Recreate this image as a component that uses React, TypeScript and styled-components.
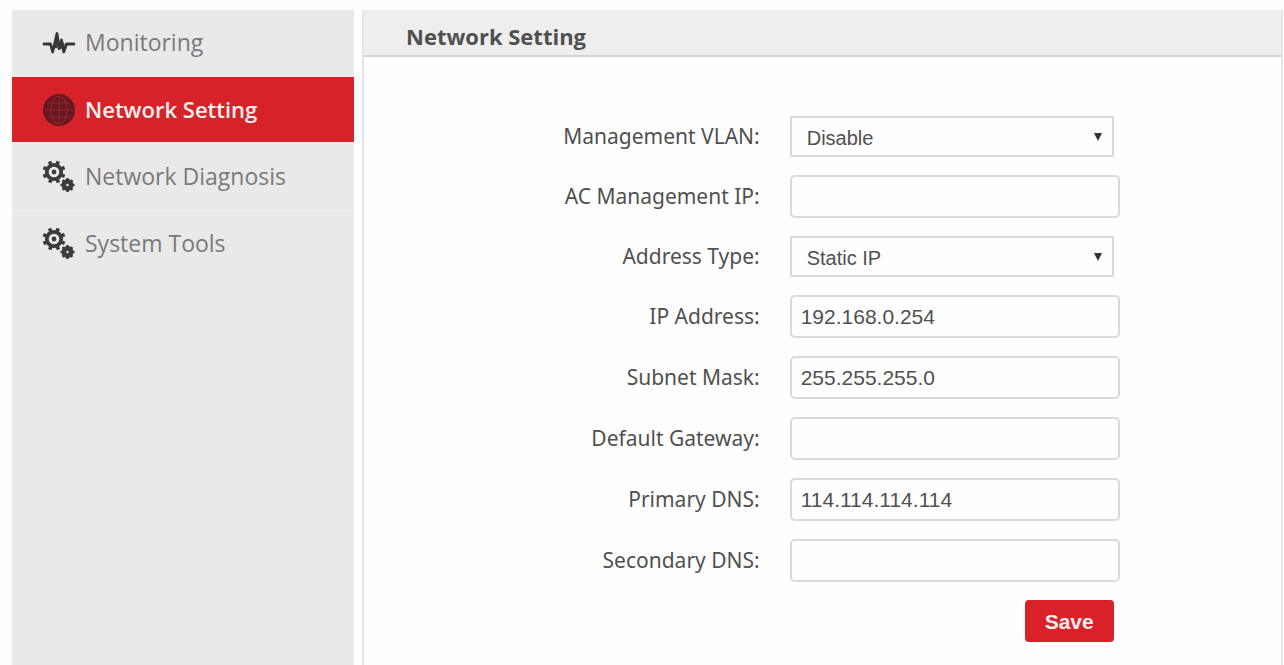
import React from "react";
import styled, { createGlobalStyle, css } from "styled-components";

const GlobalStyle = createGlobalStyle`
  *, *::before, *::after { box-sizing: border-box; }
  body {
    margin: 0;
    background: #fefefe;
    color: #505050;
    font-family: "Noto Sans", "Open Sans", sans-serif;
    font-size: 21px;
  }
`;

const Page = styled.div`
  display: flex;
  gap: 8px;
  min-height: 100vh;
  padding: 10px 1px 0 12px;
`;

const Sidebar = styled.nav`
  flex: 0 0 342px;
  background: #e9e9e9;
`;

const Menu = styled.ul`
  margin: 0;
  padding: 0;
  list-style: none;
`;

const MenuItem = styled.li`
  border-bottom: 2px solid #ececec;

  &:last-child { border-bottom: 0; }
`;

const MenuLink = styled.a<{ $active?: boolean }>`
  display: flex;
  align-items: center;
  gap: 9px;
  height: 65px;
  padding: 0 0 2px 30px;
  color: ${(p) => (p.$active ? "#fff0ee" : "#7a7a7a")};
  background: ${(p) => (p.$active ? "#d82229" : "transparent")};
  font-family: "Open Sans", "Noto Sans", sans-serif;
  font-size: ${(p) => (p.$active ? 22 : 23)}px;
  font-weight: ${(p) => (p.$active ? 600 : 400)};
  line-height: 30px;
  text-decoration: none;
`;

const Icon = styled.svg`
  flex: none;
  width: 34px;
  height: 34px;
`;

const Panel = styled.main`
  flex: 1;
  min-width: 0;
  border: solid #e4e6e6;
  border-width: 0 2px;
`;

const PanelTitle = styled.h1`
  margin: 0;
  height: 47px;
  padding: 11px 42px 0;
  background: #eeeeee;
  border-bottom: 2px solid #d4d4d4;
  color: #505050;
  font-family: "Open Sans", "Noto Sans", sans-serif;
  font-size: 22px;
  font-weight: 700;
  line-height: 30px;
`;

const Form = styled.form`
  display: grid;
  grid-template-columns: 13fr 17fr;
  column-gap: 30px;
  row-gap: 18px;
  align-items: center;
  padding: 59px 0 23px 20px;
`;

const Label = styled.label`
  justify-self: end;
  padding-bottom: 2px;
  line-height: 38px;
  white-space: nowrap;
`;

const field = css`
  border: 2px solid #dadada;
  background-color: #fefefe;
  color: #505050;
  font-family: "Liberation Sans", Arial, sans-serif;
  outline: none;
`;

const Input = styled.input`
  ${field}
  width: 330px;
  height: 43px;
  padding: 0 9px;
  border-radius: 5px;
  font-size: 21px;
`;

const SelectBox = styled.div`
  display: grid;
  width: 324px;
  height: 41px;
  align-items: center;
  > * { grid-area: 1 / 1; }
`;

const Select = styled.select`
  ${field}
  appearance: none;
  width: 100%;
  height: 41px;
  padding: 2px 15px 0;
  border-radius: 1px;
  font-size: 20px;
`;

const Arrow = styled.svg`
  justify-self: end;
  width: 8px;
  height: 8px;
  margin-right: 12px;
  fill: #333333;
  pointer-events: none;
`;

const Actions = styled.div`
  grid-column: 2;
  display: flex;
  justify-content: flex-end;
  width: 324px;
`;

const SaveButton = styled.button`
  width: 89px;
  height: 42px;
  padding: 2px 0 0;
  border: 0;
  border-radius: 4px;
  background: #d82129;
  color: #fff0ee;
  font-family: "Liberation Sans", Arial, sans-serif;
  font-size: 21px;
  font-weight: 700;
`;

const PulseIcon = () => (
  <Icon viewBox="0 0 34 34" fill="none" stroke="#383838" strokeLinejoin="round" strokeLinecap="round" aria-hidden="true">
    <path d="M2 19h6.500l2.200 8L15 8.500l2 15L19.500 15l2.300 12 2.700-8H32" strokeWidth="2.800" />
    <path d="M15 11l-1 11M19.500 17l-1 6M22 25l-1-6" strokeWidth="2.600" />
  </Icon>
);

const GlobeIcon = () => (
  <Icon viewBox="0 0 34 34" fill="none" stroke="#96222b" strokeWidth="1.200" aria-hidden="true">
    <circle cx="17" cy="18" r="16" fill="#651820" stroke="none" />
    <path d="M3 18h28M17 4v28M6 11h22M6 25h22" />
    <ellipse cx="17" cy="18" rx="8" ry="14" />
  </Icon>
);

const teeth = [0, 45, 90, 135, 180, 225, 270, 315];

const GearsIcon = () => (
  <Icon viewBox="0 0 34 34" fill="none" stroke="#3c3c3c" aria-hidden="true">
    <circle cx="12" cy="13" r="7.200" strokeWidth="3.800" />
    <circle cx="12" cy="13" r="2.400" fill="#3c3c3c" stroke="none" />
    {teeth.map((a) => (
      <path key={a} d="M12 1.500v4" strokeWidth="3.600" transform={`rotate(${a + 22} 12 13)`} />
    ))}
    <circle cx="25.500" cy="26" r="3.600" strokeWidth="4.800" />
    {teeth.map((a) => (
      <path key={a} d="M25.500 19v2" strokeWidth="2.400" transform={`rotate(${a} 25.500 26)`} />
    ))}
  </Icon>
);

const menu = [
  { text: "Monitoring", icon: PulseIcon },
  { text: "Network Setting", icon: GlobeIcon, active: true },
  { text: "Network Diagnosis", icon: GearsIcon },
  { text: "System Tools", icon: GearsIcon },
];

type FieldDef = { id: string; label: string; value: string; options?: string[] };

const fields: FieldDef[] = [
  { id: "vlan", label: "Management VLAN:", value: "Disable", options: ["Disable", "Enable"] },
  { id: "ac-ip", label: "AC Management IP:", value: "" },
  { id: "type", label: "Address Type:", value: "Static IP", options: ["Static IP", "Dynamic IP"] },
  { id: "ip", label: "IP Address:", value: "192.168.0.254" },
  { id: "mask", label: "Subnet Mask:", value: "255.255.255.0" },
  { id: "gateway", label: "Default Gateway:", value: "" },
  { id: "dns1", label: "Primary DNS:", value: "114.114.114.114" },
  { id: "dns2", label: "Secondary DNS:", value: "" },
];

export default function App() {
  return (
    <>
      <GlobalStyle />
      <Page>
        <Sidebar>
          <Menu>
            {menu.map(({ text, icon: ItemIcon, active }) => (
              <MenuItem key={text}>
                <MenuLink href="#" $active={active} aria-current={active ? "page" : undefined}>
                  <ItemIcon />
                  {text}
                </MenuLink>
              </MenuItem>
            ))}
          </Menu>
        </Sidebar>
        <Panel>
          <PanelTitle>Network Setting</PanelTitle>
          <Form onSubmit={(e) => e.preventDefault()}>
            {fields.map((f) => (
              <React.Fragment key={f.id}>
                <Label htmlFor={f.id}>{f.label}</Label>
                {f.options ? (
                  <SelectBox>
                    <Select id={f.id} defaultValue={f.value}>
                      {f.options.map((o) => (
                        <option key={o}>{o}</option>
                      ))}
                    </Select>
                    <Arrow viewBox="0 0 8 8" aria-hidden="true">
                      <path d="M0 0h8L4 8z" />
                    </Arrow>
                  </SelectBox>
                ) : (
                  <Input id={f.id} type="text" defaultValue={f.value} />
                )}
              </React.Fragment>
            ))}
            <Actions>
              <SaveButton type="submit">Save</SaveButton>
            </Actions>
          </Form>
        </Panel>
      </Page>
    </>
  );
}
